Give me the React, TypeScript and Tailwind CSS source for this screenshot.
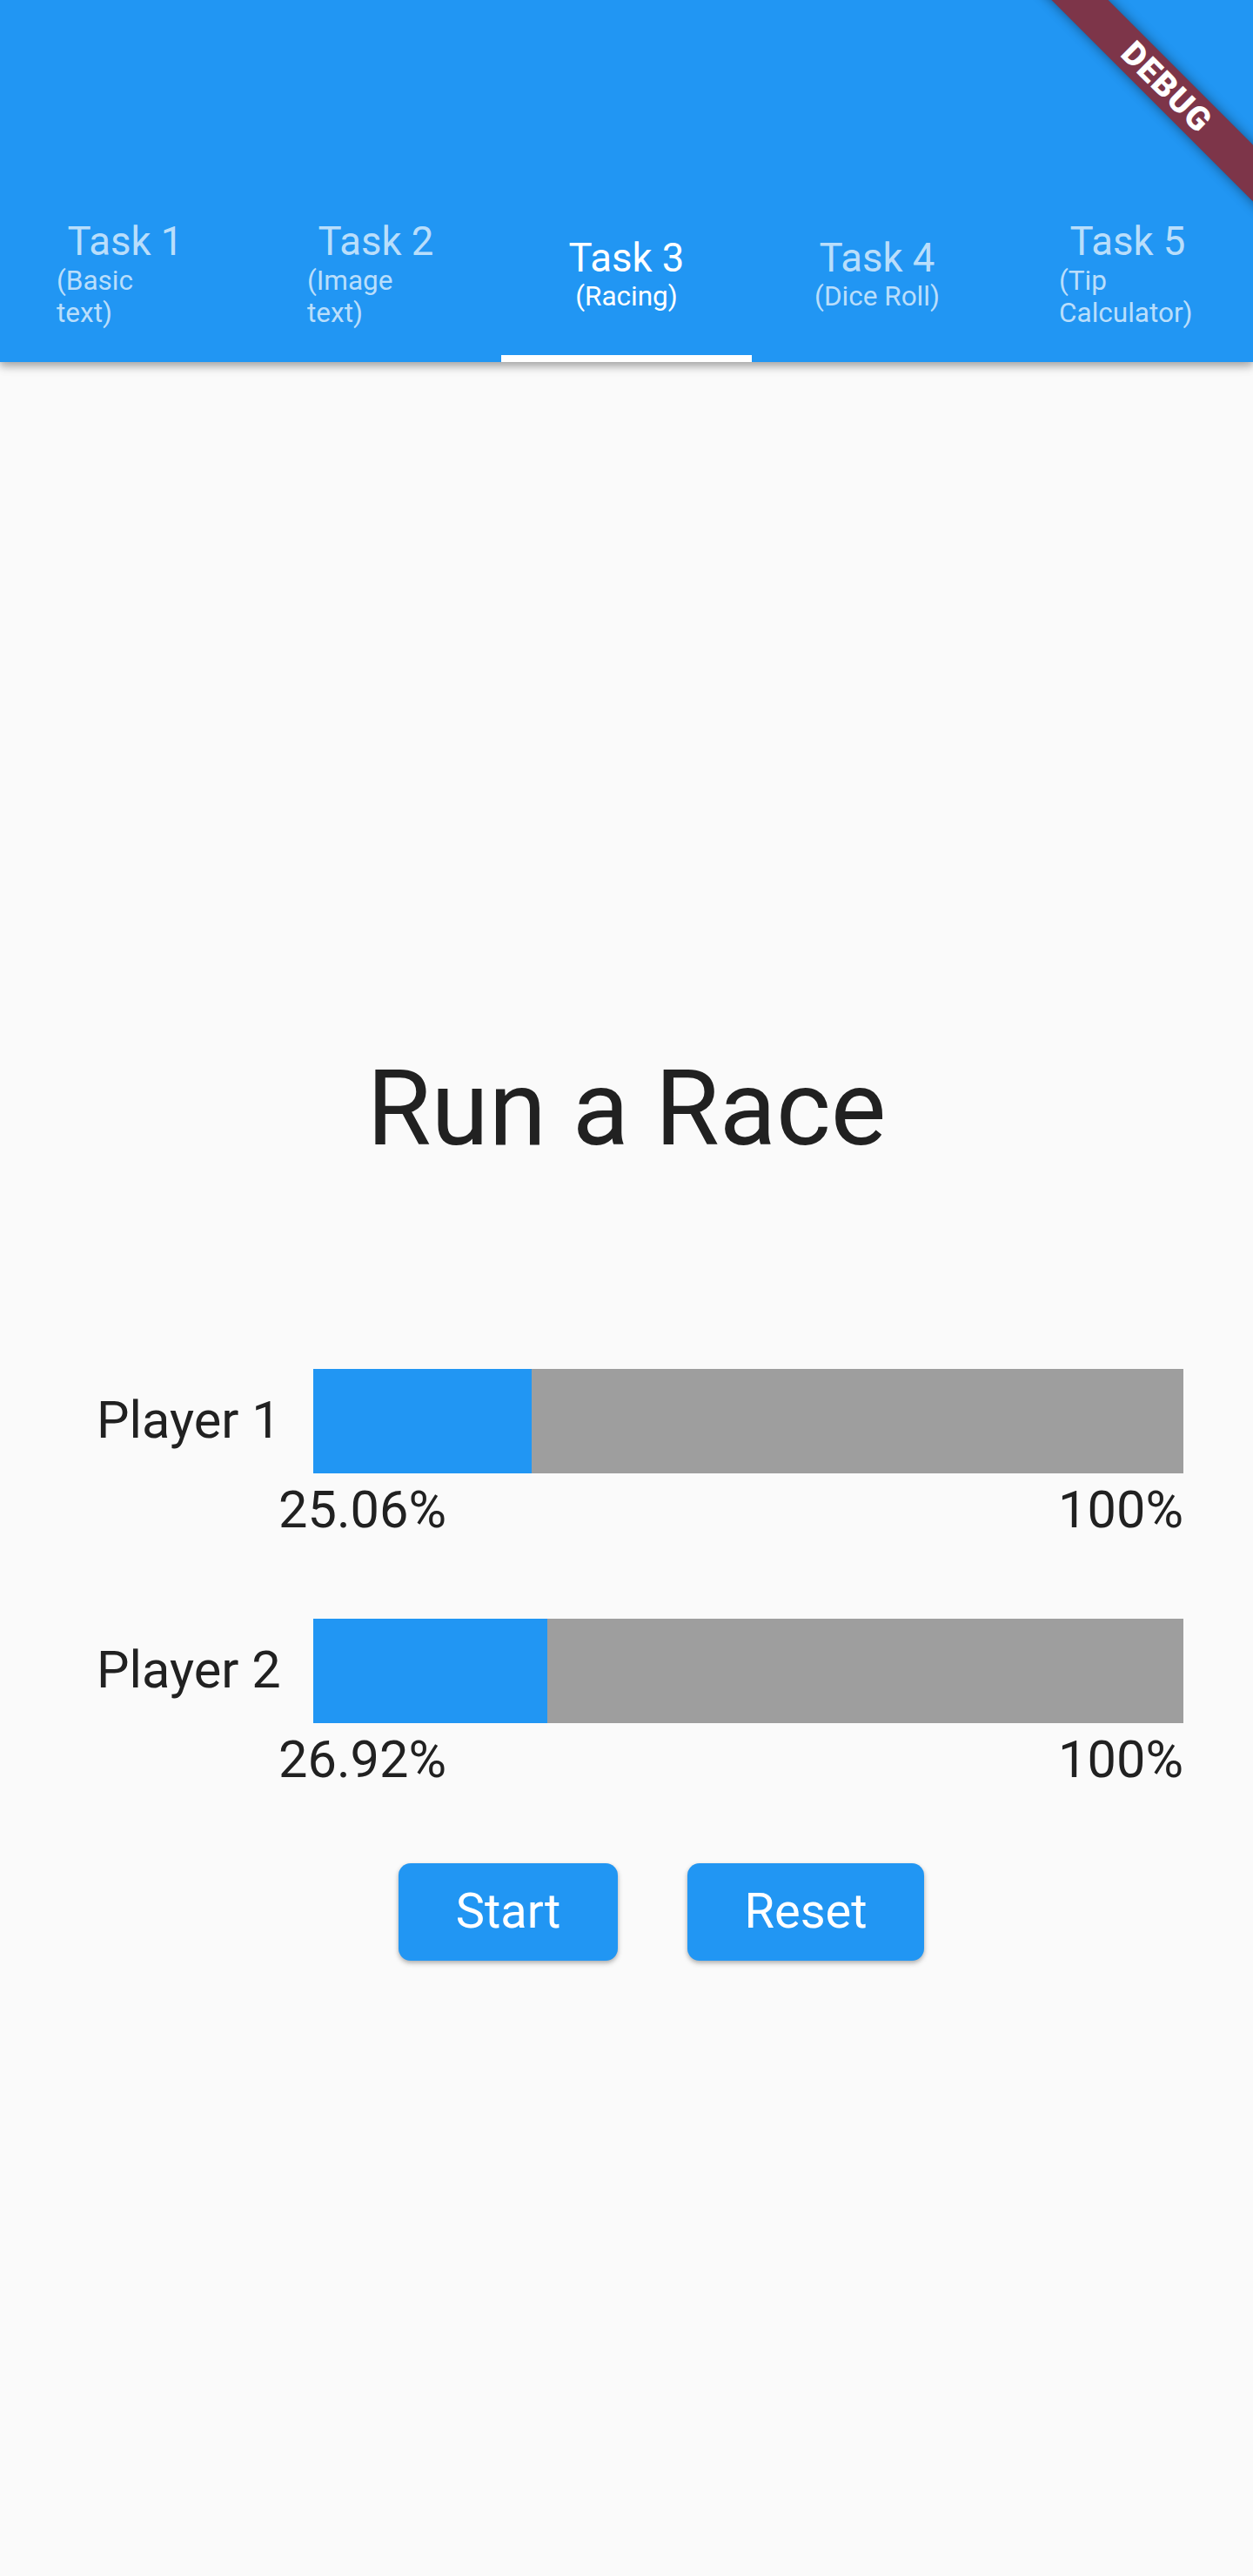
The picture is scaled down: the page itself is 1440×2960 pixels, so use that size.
import * as React from "react"

const TABS = [
  { id: 1, title: "Task 1", sub: ["(Basic", "text)"] },
  { id: 2, title: "Task 2", sub: ["(Image", "text)"] },
  { id: 3, title: "Task 3", sub: ["(Racing)"] },
  { id: 4, title: "Task 4", sub: ["(Dice Roll)"] },
  { id: 5, title: "Task 5", sub: ["(Tip", "Calculator)"] },
]

const PLAYERS = [
  { name: "Player 1", pct: 25.06 },
  { name: "Player 2", pct: 26.92 },
]

export default function App() {
  const [active, setActive] = React.useState(3)

  return (
    <div className="relative min-h-[2960px] bg-[#fafafa] font-['Roboto',sans-serif] text-[#212121] overflow-hidden">
      {/* App bar */}
      <header className="relative z-10 h-[416px] bg-[#2196f3] flex flex-col justify-end shadow-[0_4px_8px_rgba(0,0,0,0.2),0_7px_10px_rgba(0,0,0,0.1),0_2px_16px_rgba(0,0,0,0.1)]">
        <nav className="h-[194px] flex">
          {TABS.map((tab) => {
            const selected = tab.id === active
            return (
              <button
                key={tab.id}
                onClick={() => setActive(tab.id)}
                className={
                  "flex-1 flex flex-col " + (selected ? "text-white" : "text-white/70")
                }
              >
                <div className="flex-1 flex flex-col items-center justify-center">
                  <span className="text-[45.5px] leading-[1.172] whitespace-nowrap">{tab.title}</span>
                  {tab.sub.length > 1 ? (
                    <span className="w-[158px] text-left text-[31.5px] leading-[1.172]">
                      {tab.sub[0]}
                      <br />
                      {tab.sub[1]}
                    </span>
                  ) : (
                    <span className="text-[31.5px] leading-[1.172] whitespace-nowrap">{tab.sub[0]}</span>
                  )}
                </div>
                <div className={"h-2 w-full " + (selected ? "bg-white" : "bg-transparent")}></div>
              </button>
            )
          })}
        </nav>
      </header>

      {/* Body */}
      <main className="pt-[788px] flex flex-col">
        <h1 className="text-center text-[120px] leading-[1.172] font-normal">Run a Race</h1>

        <div className="mt-[228px] flex flex-col">
          {PLAYERS.map((p, i) => (
            <div key={p.name} className={i > 0 ? "mt-[89px]" : ""}>
              <div className="h-[120px] flex items-center pl-[111px]">
                <span className="w-[249px] text-[59.5px] leading-[1.172] whitespace-nowrap">{p.name}</span>
                <div className="w-[1000px] h-full flex bg-[#9e9e9e]">
                  <div className="h-full bg-[#2196f3]" style={{ width: `${p.pct}%` }}></div>
                </div>
              </div>
              <div className="mt-[8.5px] ml-[320px] w-[1040px] flex justify-between text-[59.5px] leading-[1.172]">
                <span>{p.pct.toFixed(2)}%</span>
                <span>100%</span>
              </div>
            </div>
          ))}
        </div>

        <div className="mt-[83px] flex pl-[458px] gap-[80px]">
          <button className="h-[112px] w-[252px] rounded-[14px] bg-[#2196f3] text-white text-[56px] leading-[1.172] shadow-[0_3px_6px_rgba(0,0,0,0.2),0_2px_4px_rgba(0,0,0,0.14)]">
            Start
          </button>
          <button className="h-[112px] w-[272px] rounded-[14px] bg-[#2196f3] text-white text-[56px] leading-[1.172] shadow-[0_3px_6px_rgba(0,0,0,0.2),0_2px_4px_rgba(0,0,0,0.14)]">
            Reset
          </button>
        </div>
      </main>

      {/* Debug banner */}
      <div className="absolute top-0 right-0 z-20 w-[300px] h-[300px] overflow-hidden pointer-events-none">
        <div className="absolute left-[1px] top-[77px] w-[400px] h-[46px] rotate-45 bg-[#7d3549] shadow-[0_0_14px_rgba(0,0,0,0.45)] flex items-center justify-center">
          <span className="text-white text-[38px] leading-none font-black tracking-[1.5px]">DEBUG</span>
        </div>
      </div>
    </div>
  )
}
